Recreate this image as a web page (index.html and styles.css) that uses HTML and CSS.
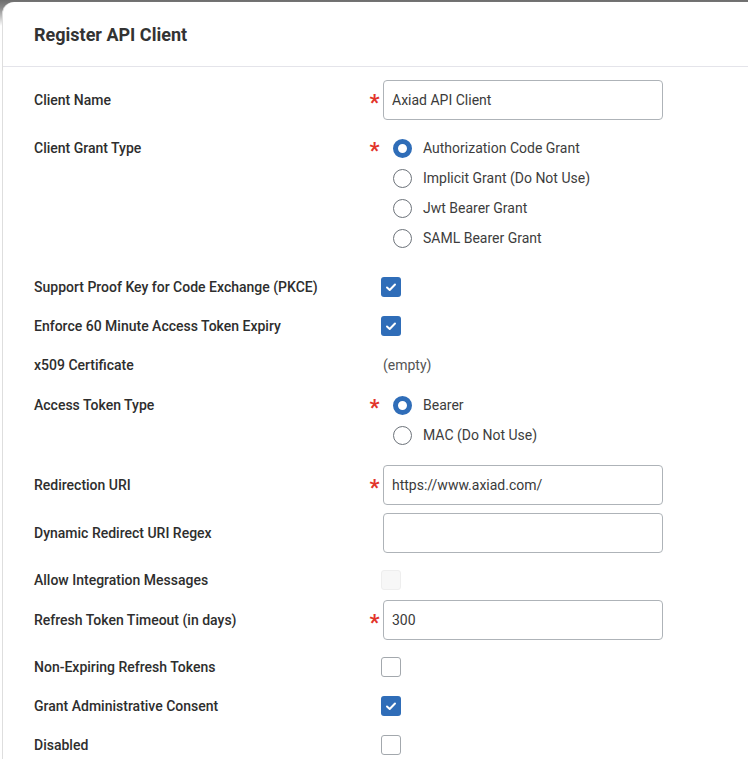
FILE: index.html
```html
<!DOCTYPE html>
<html lang="en">

<head>
    <title>Register API Client</title>
    <meta charset="UTF-8">
    <meta name="viewport" content="width=device-width, initial-scale=1.0">
    <link rel="stylesheet" href="styles.css">
</head>

<body>
    <div class="dialog">
        <div class="dialog-head">
            <h2>Register API Client</h2>
        </div>
        <form class="dialog-body">
            <div class="row">
                <label class="label">Client Name</label>
                <span class="req">*</span>
                <div class="field"><input class="text" type="text" value="Axiad API Client"></div>
            </div>
            <div class="row">
                <label class="label">Client Grant Type</label>
                <span class="req">*</span>
                <div class="field radios">
                    <label class="radio"><span class="dot on"></span>Authorization Code Grant</label>
                    <label class="radio"><span class="dot"></span>Implicit Grant (Do Not Use)</label>
                    <label class="radio"><span class="dot"></span>Jwt Bearer Grant</label>
                    <label class="radio"><span class="dot"></span>SAML Bearer Grant</label>
                </div>
            </div>
            <div class="row row-check">
                <label class="label">Support Proof Key for Code Exchange (PKCE)</label>
                <span class="req"></span>
                <div class="field check-wrap"><span class="box on"><svg viewBox="0 0 20 20"><polyline points="6,10.5 8.7,13 14,7.5"/></svg></span></div>
            </div>
            <div class="row row-check">
                <label class="label">Enforce 60 Minute Access Token Expiry</label>
                <span class="req"></span>
                <div class="field check-wrap"><span class="box on"><svg viewBox="0 0 20 20"><polyline points="6,10.5 8.7,13 14,7.5"/></svg></span></div>
            </div>
            <div class="row row-check">
                <label class="label">x509 Certificate</label>
                <span class="req"></span>
                <div class="field check-wrap"><span class="empty">(empty)</span></div>
            </div>
            <div class="row">
                <label class="label">Access Token Type</label>
                <span class="req">*</span>
                <div class="field radios">
                    <label class="radio"><span class="dot on"></span>Bearer</label>
                    <label class="radio"><span class="dot"></span>MAC (Do Not Use)</label>
                </div>
            </div>
            <div class="row">
                <label class="label">Redirection URI</label>
                <span class="req">*</span>
                <div class="field"><input class="text" type="text" value="https://www.axiad.com/"></div>
            </div>
            <div class="row">
                <label class="label">Dynamic Redirect URI Regex</label>
                <span class="req"></span>
                <div class="field"><input class="text" type="text" value=""></div>
            </div>
            <div class="row row-check">
                <label class="label">Allow Integration Messages</label>
                <span class="req"></span>
                <div class="field check-wrap"><span class="box off"></span></div>
            </div>
            <div class="row">
                <label class="label">Refresh Token Timeout (in days)</label>
                <span class="req">*</span>
                <div class="field"><input class="text" type="text" value="300"></div>
            </div>
            <div class="row row-check">
                <label class="label">Non-Expiring Refresh Tokens</label>
                <span class="req"></span>
                <div class="field check-wrap"><span class="box"></span></div>
            </div>
            <div class="row row-check">
                <label class="label">Grant Administrative Consent</label>
                <span class="req"></span>
                <div class="field check-wrap"><span class="box on"><svg viewBox="0 0 20 20"><polyline points="6,10.5 8.7,13 14,7.5"/></svg></span></div>
            </div>
            <div class="row row-check">
                <label class="label">Disabled</label>
                <span class="req"></span>
                <div class="field check-wrap"><span class="box"></span></div>
            </div>
        </form>
    </div>
</body>

</html>
```

FILE: styles.css
```css
body {
    margin: 0;
    font-family: Roboto, "Liberation Sans", Arial, sans-serif;
    color: #333;
    background: linear-gradient(to bottom, #6e6e6e 0, #8a8a8a 8px, #fff 26px) no-repeat;
}
.dialog {
    margin: 2px 0 0 2px;
    min-height: 757px;
    background-color: #fff;
    border-left: 1px solid #dedede;
    border-top-left-radius: 12px;
}
.dialog-head {
    height: 64px;
    padding: 0 31px;
    display: flex;
    align-items: center;
    border-bottom: 1px solid #e4e4ea;
}
.dialog-head h2 {
    margin: 0;
    font-size: 18px;
    font-weight: 700;
    color: #333;
}
.dialog-body {
    padding: 13px 0 0 31px;
    display: flex;
    flex-direction: column;
    gap: 8px;
}
.row {
    display: grid;
    grid-template-columns: 330px 19px 280px;
    align-items: start;
}
.label,
.req {
    padding-top: 10px;
    line-height: 20px;
}
.label {
    font-size: 14px;
    font-weight: 500;
    color: #2e2e2e;
}
.req {
    font-size: 22px;
    font-weight: 700;
    color: #e2342a;
    text-align: center;
    padding-left: 2px;
    height: 20px;
    line-height: 26px;
}
.row-check .label,
.row-check .req {
    padding-top: 9px;
}
/* text inputs */
.text {
    box-sizing: border-box;
    width: 280px;
    height: 40px;
    margin: 0;
    padding: 0 8px;
    border: 1px solid #aeb3b8;
    border-radius: 4px;
    font-family: inherit;
    font-size: 14px;
    color: #3a3a3a;
    outline: none;
}
/* radio groups */
.radios {
    padding: 10px 0 12px 10px;
    display: flex;
    flex-direction: column;
    gap: 10px;
}
.radio {
    display: flex;
    align-items: center;
    height: 20px;
    font-size: 14px;
    color: #3d3d3d;
}
.dot {
    box-sizing: border-box;
    width: 19px;
    height: 19px;
    margin-right: 11px;
    border: 1.5px solid #6d737a;
    border-radius: 50%;
    background-color: #fff;
}
.dot.on {
    border: 5.5px solid #2f6db8;
}
/* checkboxes */
.check-wrap {
    height: 31px;
    padding-top: 9px;
    box-sizing: border-box;
}
.box {
    display: block;
    box-sizing: border-box;
    width: 20px;
    height: 20px;
    margin-left: -2px;
    border: 1.5px solid #a3a8ad;
    border-radius: 3px;
}
.box.on {
    border: none;
    background-color: #2f6db8;
}
.box.off {
    border: 1px solid #eeeeee;
    background-color: #f7f7f7;
}
.box svg {
    display: block;
    width: 20px;
    height: 20px;
}
.box polyline {
    fill: none;
    stroke: #fff;
    stroke-width: 2;
    stroke-linecap: round;
    stroke-linejoin: round;
}
.empty {
    display: block;
    font-size: 14px;
    line-height: 20px;
    color: #555;
}
```
